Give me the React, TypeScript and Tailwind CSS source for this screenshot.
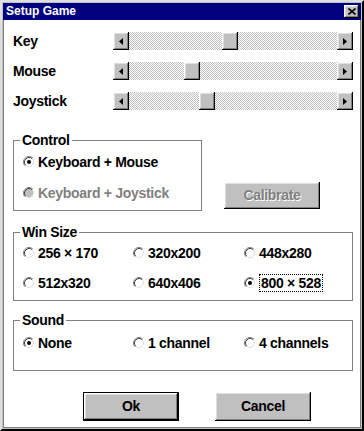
import { ReactNode } from "react";

type Slider = { label: string; pos: number };

const sliders: Slider[] = [
  { label: "Key", pos: 93 },
  { label: "Mouse", pos: 55 },
  { label: "Joystick", pos: 70 },
];

const winSizes = [
  { label: "256 × 170" },
  { label: "320x200" },
  { label: "448x280" },
  { label: "512x320" },
  { label: "640x406" },
  { label: "800 × 528", checked: true },
];

const sounds = [
  { label: "None", checked: true },
  { label: "1 channel" },
  { label: "4 channels" },
];

const bevel =
  "bg-[#c0c0c0] shadow-[inset_-1px_-1px_0_#000,inset_1px_1px_0_#fff,inset_-2px_-2px_0_#808080,inset_2px_2px_0_#dfdfdf]";

function Radio({ checked, disabled }: { checked?: boolean; disabled?: boolean }) {
  return (
    <svg width="12" height="12" viewBox="0 0 12 12" className="shrink-0">
      <circle cx="6" cy="6" r="5" fill={disabled ? "#c0c0c0" : "#fff"} />
      <path d="M2.11 9.89 A5.5 5.5 0 0 1 9.89 2.11" fill="none" stroke="#808080" />
      <path d="M2.82 9.18 A4.5 4.5 0 0 1 9.18 2.82" fill="none" stroke="#404040" />
      <path d="M9.89 2.11 A5.5 5.5 0 0 1 2.11 9.89" fill="none" stroke="#fff" />
      <path d="M9.18 2.82 A4.5 4.5 0 0 1 2.82 9.18" fill="none" stroke="#dfdfdf" />
      {checked && <circle cx="6" cy="6" r="2" fill={disabled ? "#808080" : "#000"} />}
    </svg>
  );
}

function Option({
  label,
  checked,
  disabled,
  focused,
}: {
  label: string;
  checked?: boolean;
  disabled?: boolean;
  focused?: boolean;
}) {
  return (
    <div className="flex items-center h-[18px] gap-[3px]">
      <Radio checked={checked} disabled={disabled} />
      <span
        className={
          (disabled ? "text-[#808080] " : "text-black ") +
          (focused ? "border border-dotted border-black px-[1px] leading-[16px]" : "leading-[18px]")
        }
      >
        {label}
      </span>
    </div>
  );
}

function Group({ title, className, children }: { title: string; className: string; children: ReactNode }) {
  return (
    <div className={"relative border border-[#808080] " + className}>
      <span className="absolute left-[6px] -top-[10px] px-[2px] bg-white leading-[18px]">{title}</span>
      {children}
    </div>
  );
}

function ScrollBar({ pos }: { pos: number }) {
  return (
    <div className="flex w-[240px] h-[18px]">
      <div className={"w-[16px] h-full flex items-center justify-center " + bevel}>
        <svg width="4" height="7" viewBox="0 0 4 7">
          <path d="M4 0 L0 3.5 L4 7 Z" fill="#000" />
        </svg>
      </div>
      <div className="flex-1 h-full bg-[repeating-conic-gradient(#c0c0c0_0%_25%,#fff_0%_50%)] bg-[length:2px_2px]">
        <div className={"w-[16px] h-full " + bevel} style={{ marginLeft: pos }} />
      </div>
      <div className={"w-[16px] h-full flex items-center justify-center " + bevel}>
        <svg width="4" height="7" viewBox="0 0 4 7">
          <path d="M0 0 L4 3.5 L0 7 Z" fill="#000" />
        </svg>
      </div>
    </div>
  );
}

export default function App() {
  return (
    <div
      className="w-[364px] h-[431px] bg-[#c0c0c0] border-2 border-l-[#dfdfdf] border-t-[#dfdfdf] border-r-black border-b-black p-[1px] flex flex-col font-bold text-[14px] tracking-[-0.3px] text-black"
      style={{ fontFamily: '"Liberation Sans", Arial, sans-serif' }}
    >
      <div className="h-[17px] bg-[#000080] flex items-center justify-between pl-[3px] pr-[2px] shrink-0">
        <span className="text-white text-[12px] tracking-normal leading-[17px]">Setup Game</span>
        <div className={"w-[15px] h-[13px] flex items-center justify-center " + bevel}>
          <svg width="8" height="7" viewBox="0 0 8 7">
            <path d="M0.5 0.5 L7.5 6.5 M7.5 0.5 L0.5 6.5" stroke="#000" strokeWidth="1.6" />
          </svg>
        </div>
      </div>

      <div className="flex-1 bg-white border-l border-b border-r border-[#808080] pl-[9px] flex flex-col">
        <div className="flex flex-col gap-[12px] mt-[12px]">
          {sliders.map((s) => (
            <div key={s.label} className="flex items-center h-[18px]">
              <span className="w-[100px] leading-[18px]">{s.label}</span>
              <ScrollBar pos={s.pos} />
            </div>
          ))}
        </div>

        <div className="flex items-end gap-[22px] mt-[30px]">
          <Group title="Control" className="w-[189px] pl-[9px] pt-[12px] pb-[8px]">
            <div className="flex flex-col gap-[13px]">
              <Option label="Keyboard + Mouse" checked />
              <Option label="Keyboard + Joystick" disabled />
            </div>
          </Group>
          <div
            className={
              "w-[96px] h-[27px] mb-[2px] flex items-center justify-center text-[#808080] [text-shadow:1px_1px_0_#fff] " +
              bevel
            }
          >
            Calibrate
          </div>
        </div>

        <Group title="Win Size" className="w-[340px] mt-[21px] pl-[9px] pt-[11px] pb-[8px]">
          <div className="grid grid-cols-[110px_111px_1fr] gap-y-[12px]">
            {winSizes.map((w) => (
              <Option key={w.label} label={w.label} checked={w.checked} focused={w.checked} />
            ))}
          </div>
        </Group>

        <Group title="Sound" className="w-[340px] mt-[19px] pl-[9px] pt-[13px] pb-[18px]">
          <div className="grid grid-cols-[110px_111px_1fr]">
            {sounds.map((s) => (
              <Option key={s.label} label={s.label} checked={s.checked} />
            ))}
          </div>
        </Group>

        <div className="flex gap-[36px] mt-[21px] pl-[70px]">
          <div className="w-[96px] h-[29px] flex items-center justify-center bg-[#c0c0c0] shadow-[inset_0_0_0_1px_#000,inset_-2px_-2px_0_#000,inset_2px_2px_0_#fff,inset_-3px_-3px_0_#808080,inset_3px_3px_0_#dfdfdf]">
            Ok
          </div>
          <div className={"w-[96px] h-[29px] flex items-center justify-center " + bevel}>Cancel</div>
        </div>
      </div>
    </div>
  );
}
